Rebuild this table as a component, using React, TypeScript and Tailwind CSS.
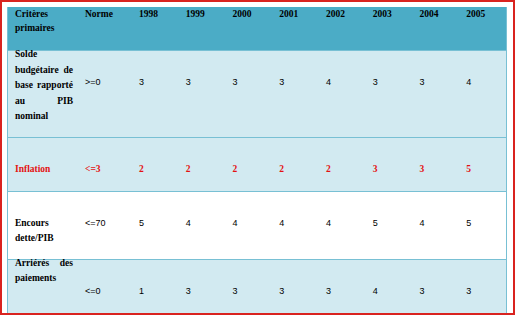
const years = ['1998', '1999', '2000', '2001', '2002', '2003', '2004', '2005'];

type Row = {
  label: string;
  norme: string;
  values: number[];
  height: string;
  bg: string;
  red?: boolean;
  labelClass: string;
};

const rows: Row[] = [
  {
    label: 'Solde budgétaire de base rapporté au PIB nominal',
    norme: '>=0',
    values: [3, 3, 3, 3, 4, 3, 3, 4],
    height: 'h-[87px]',
    bg: 'bg-[#d2eaf1]',
    labelClass: '-mt-[4px] leading-[15.5px]',
  },
  {
    label: 'Inflation',
    norme: '<=3',
    values: [2, 2, 2, 2, 2, 3, 3, 5],
    height: 'h-[54px]',
    bg: 'bg-[#d2eaf1]',
    red: true,
    labelClass: 'pt-[24px] leading-[15px]',
  },
  {
    label: 'Encours dette/PIB',
    norme: '<=70',
    values: [5, 4, 4, 4, 4, 5, 4, 5],
    height: 'h-[68px]',
    bg: 'bg-white',
    labelClass: 'pt-[24px] leading-[15px]',
  },
  {
    label: 'Arriérés des paiements',
    norme: '<=0',
    values: [1, 3, 3, 3, 3, 4, 3, 3],
    height: 'h-[54px]',
    bg: 'bg-[#d2eaf1]',
    labelClass: '-mt-[4px] leading-[15px]',
  },
];

const serif = "font-['Liberation_Serif',serif] font-bold text-[9.5px]";
const sans = "font-['Liberation_Sans',sans-serif] text-[9px]";

export default function App() {
  return (
    <div className="w-[515px] h-[315px] border-2 border-[#d9231f] bg-white pl-[5px] pt-[5px] overflow-hidden">
      <div className="w-[500px] h-[306px] border-x border-[#78c0d4] flex flex-col">
        {/* header */}
        <div className="h-[43px] shrink-0 bg-[#4bacc6] grid grid-cols-[70px_54px_repeat(8,1fr)] text-black">
          <div className={`${serif} leading-[14px] pl-[7px]`}>
            Critères
            <br />
            primaires
          </div>
          <div className={`${serif} leading-[14px] pl-[7px]`}>Norme</div>
          {years.map(y => (
            <div key={y} className={`${serif} leading-[14px] pl-[7px]`}>
              {y}
            </div>
          ))}
        </div>

        {rows.map(r => {
          const cell = r.red ? `${serif} text-[#e41212]` : `${sans} text-black`;
          return (
            <div
              key={r.label}
              className={`${r.height} shrink-0 ${r.bg} border-t border-[#78c0d4] grid grid-cols-[70px_54px_repeat(8,1fr)]`}
            >
              <div className="pl-[7px] pr-[5px]">
                <div className={`${serif} ${r.labelClass} text-justify ${r.red ? 'text-[#e41212]' : 'text-black'}`}>
                  {r.label}
                </div>
              </div>
              <div className={`${cell} pl-[7px] pt-[24px] leading-[15px]`}>{r.norme}</div>
              {r.values.map((v, i) => (
                <div key={i} className={`${cell} pl-[7px] pt-[24px] leading-[15px]`}>
                  {v}
                </div>
              ))}
            </div>
          );
        })}
      </div>
    </div>
  );
}
